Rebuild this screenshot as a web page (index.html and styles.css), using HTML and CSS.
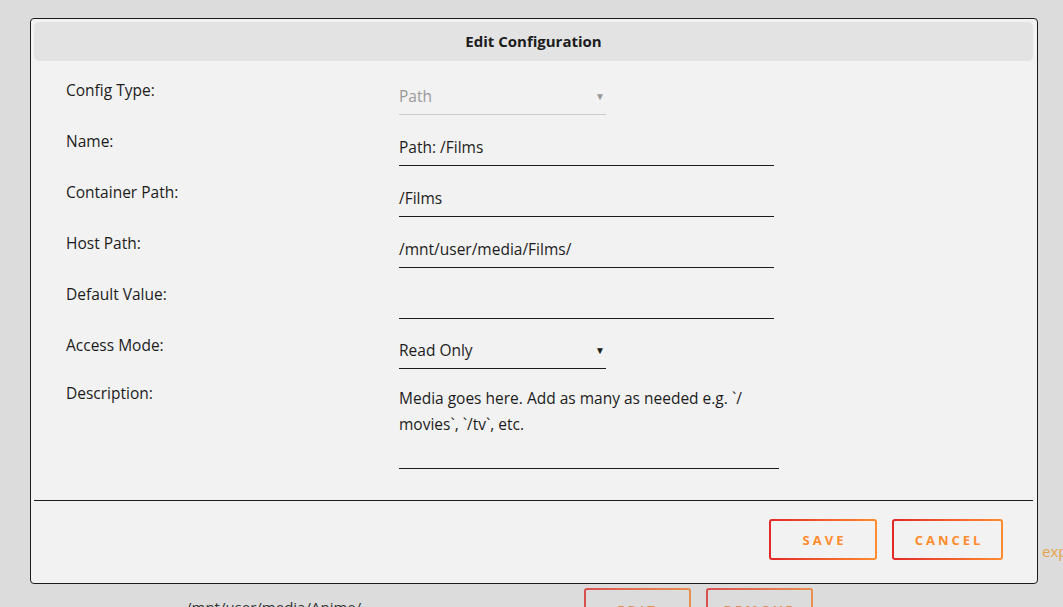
FILE: index.html
```html
<!DOCTYPE html>
<html>
<head>
<meta charset="utf-8">
<link rel="stylesheet" href="styles.css">
</head>
<body>
<div class="page">
  <div class="bg-top">Target</div>
  <div class="bg-exp">exp</div>
  <div class="bg-row">
    <span class="bg-path">/mnt/user/media/Anime/</span>
    <span class="bg-btn">EDIT</span>
    <span class="bg-btn wide">REMOVE</span>
  </div>
</div>

<div class="dialog">
  <div class="title">Edit Configuration</div>
  <div class="form">
    <div class="row">
      <div class="label">Config Type:</div>
      <div class="field select disabled"><span>Path</span><span class="arrow">&#9660;</span></div>
    </div>
    <div class="row">
      <div class="label">Name:</div>
      <div class="field text">Path: /Films</div>
    </div>
    <div class="row">
      <div class="label">Container Path:</div>
      <div class="field text">/Films</div>
    </div>
    <div class="row">
      <div class="label">Host Path:</div>
      <div class="field text">/mnt/user/media/Films/</div>
    </div>
    <div class="row">
      <div class="label">Default Value:</div>
      <div class="field text"></div>
    </div>
    <div class="row">
      <div class="label">Access Mode:</div>
      <div class="field select short"><span>Read Only</span><span class="arrow">&#9660;</span></div>
    </div>
    <div class="row desc">
      <div class="label">Description:</div>
      <div class="field area">Media goes here. Add as many as needed e.g. `/<br>movies`, `/tv`, etc.</div>
    </div>
  </div>
  <div class="sep"></div>
  <div class="actions">
    <button class="btn save">SAVE</button>
    <button class="btn cancel">CANCEL</button>
  </div>
</div>
</body>
</html>
```
FILE: styles.css
```css
html, body {
  margin: 0;
  padding: 0;
}
body {
  background: #dcdcdc;
  font-family: "Open Sans", "Liberation Sans", sans-serif;
  color: #1c1c1c;
  width: 1063px;
  height: 607px;
  overflow: hidden;
  position: relative;
}
.page {
  height: 607px;
  position: relative;
}
.bg-top {
  position: absolute;
  left: 185px;
  top: 14px;
  font-size: 15px;
  color: #333;
}
.bg-exp {
  position: absolute;
  left: 1042px;
  top: 541px;
  font-size: 15px;
  color: #e5a34a;
}
.bg-row {
  position: absolute;
  left: 186px;
  top: 588px;
  display: flex;
  align-items: flex-start;
}
.bg-path {
  font-size: 15px;
  color: #333;
  margin-top: 9px;
  width: 398px;
}
.bg-btn {
  box-sizing: border-box;
  width: 107px;
  height: 40px;
  border: 2px solid transparent;
  border-radius: 3px;
  background: linear-gradient(#dcdcdc, #dcdcdc) padding-box, linear-gradient(90deg, #d95050, #e89050) border-box;
  color: #e09050;
  font-weight: bold;
  font-size: 13px;
  letter-spacing: 3px;
  text-align: center;
  padding-top: 11px;
  margin-right: 15px;
}
.bg-btn.wide {
  width: 107px;
}

.dialog {
  position: absolute;
  left: 30px;
  top: 18px;
  width: 1008px;
  height: 566px;
  box-sizing: border-box;
  border: 1px solid #1c1c1c;
  border-radius: 4px;
  background: #f2f2f2;
  padding: 3px 4px 0 3px;
  display: flex;
  flex-direction: column;
}
.title {
  height: 39px;
  line-height: 38px;
  background: #e3e3e3;
  border-radius: 5px;
  text-align: center;
  font-weight: bold;
  font-size: 15px;
  color: #1c1c1c;
}
.form {
  padding: 16px 0 0 32px;
  display: flex;
  flex-direction: column;
}
.row {
  display: grid;
  grid-template-columns: 333px auto;
  height: 51px;
}
.label {
  font-size: 15.5px;
  line-height: 20px;
  padding-top: 3px;
}
.field {
  box-sizing: border-box;
  font-size: 15.5px;
  line-height: 20px;
  border-bottom: 1px solid #1c1c1c;
  height: 38px;
  padding-top: 9px;
  width: 375px;
}
.select {
  width: 207px;
  display: flex;
  justify-content: space-between;
}
.select.short {
  height: 37px;
  padding-top: 8px;
}
.select .arrow {
  font-size: 10px;
  padding-right: 1px;
  line-height: 20px;
}
.disabled {
  color: #999;
  border-bottom-color: #cccccc;
}
.desc {
  height: auto;
}
.desc .label {
  padding-top: 0;
}
.area {
  width: 380px;
  height: 86px;
  line-height: 26px;
  padding-top: 2px;
}
.sep {
  margin-top: 31px;
  height: 1px;
  background: #1c1c1c;
}
.actions {
  display: flex;
  justify-content: flex-end;
  gap: 15px;
  padding: 18px 30px 0 0;
}
.btn {
  box-sizing: border-box;
  height: 41px;
  border: 2px solid transparent;
  border-radius: 3px;
  background: linear-gradient(#f2f2f2, #f2f2f2) padding-box, linear-gradient(90deg, #e22828, #ff8c2f) border-box;
  color: #ff8c2f;
  font-family: "Open Sans", "Liberation Sans", sans-serif;
  font-weight: bold;
  font-size: 13px;
  letter-spacing: 3px;
  padding: 0 0 0 3px;
  text-align: center;
}
.save {
  width: 108px;
}
.cancel {
  width: 111px;
}
```
